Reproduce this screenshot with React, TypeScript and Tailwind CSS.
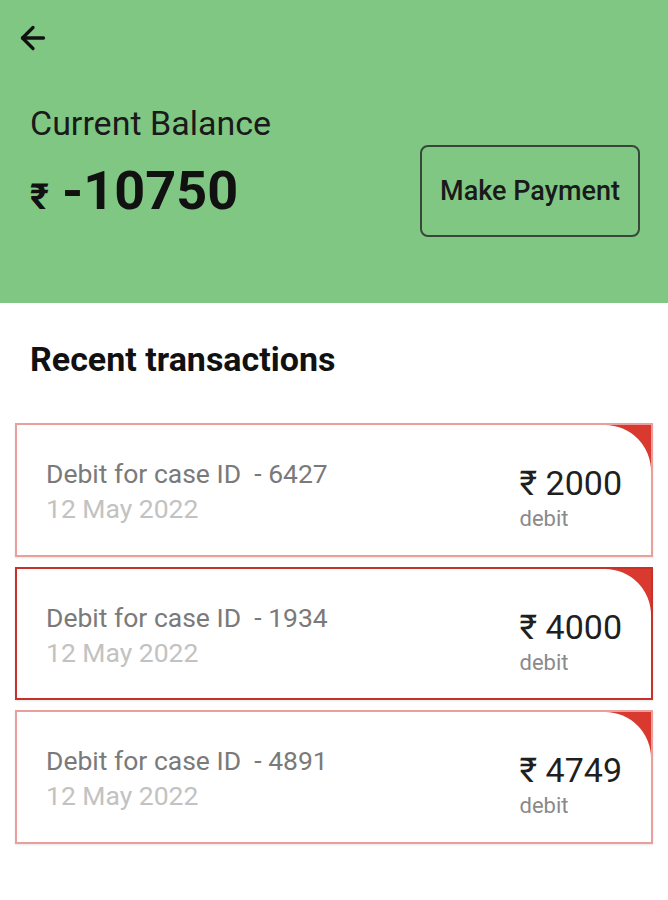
import React from 'react';
import { ArrowLeft } from 'lucide-react';

const transactions = [
  { id: '6427', date: '12 May 2022', amount: 2000, border: 'border-[#eb9f9c]' },
  { id: '1934', date: '12 May 2022', amount: 4000, border: 'border-[#c8302a]' },
  { id: '4891', date: '12 May 2022', amount: 4749, border: 'border-[#eb9f9c]' },
];

const TransactionCard = ({ id, date, amount, border }: (typeof transactions)[number]) => {
  return (
    <div className={`bg-[#d9392f] border-2 ${border} shadow-[0_1px_2px_rgba(0,0,0,0.1)]`}>
      <div className="bg-white rounded-tr-[46px] h-[129.5px] flex items-start justify-between pl-[29px] pr-[29px] pt-[30px]">
        <div className="flex flex-col">
          <span className="text-[26.5px] leading-[37px] text-[#7a7a7a]">Debit for case ID&nbsp; - {id}</span>
          <span className="text-[26.5px] leading-[34px] text-[#c2c2c2]">{date}</span>
        </div>
        <div className="flex flex-col mt-[7px]">
          <span className="text-[34px] leading-[42px] text-[#1f1f1f]">₹ {amount}</span>
          <span className="text-[22px] leading-[30px] text-[#8a8a8a]">debit</span>
        </div>
      </div>
    </div>
  );
};

export default function App() {
  return (
    <div className="w-[668px] min-h-[900px] bg-white font-['Roboto',sans-serif]">
      {/* Balance header */}
      <section className="bg-[#81c784] h-[303px] pl-[30px] pr-[28px] pt-[20px]">
        <ArrowLeft className="-ml-[15px] w-[36px] h-[36px] text-[#111]" strokeWidth={2.2} />
        <div className="flex items-start justify-between mt-[47px]">
          <div>
            <h2 className="text-[34px] leading-[40px] text-[#1a1a1a]">Current Balance</h2>
            <div className="flex items-baseline mt-[16px] text-[#111] font-bold">
              <span className="text-[36px] mr-[13px]">₹</span>
              <span className="text-[54px] leading-[64px]">-10750</span>
            </div>
          </div>
          <button className="mt-[42px] w-[220px] h-[92px] border-2 border-[#37473a] rounded-[8px] text-[27px] font-medium text-[#1a1a1a]">
            Make Payment
          </button>
        </div>
      </section>

      {/* Recent transactions */}
      <section className="pt-[36px] pb-[40px]">
        <h3 className="px-[30px] text-[34px] leading-[40px] font-bold text-[#111]">Recent transactions</h3>
        <div className="mt-[44px] px-[15px] flex flex-col gap-[10px]">
          {transactions.map((t) => (
            <TransactionCard key={t.id} {...t} />
          ))}
        </div>
      </section>
    </div>
  );
}
